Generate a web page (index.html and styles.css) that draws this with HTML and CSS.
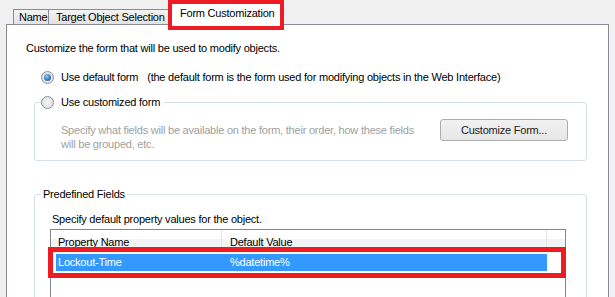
FILE: index.html
```html
<!DOCTYPE html>
<html lang="en">
<head>
  <meta charset="UTF-8" />
  <title>Form Customization</title>
  <link rel="stylesheet" href="styles.css">
</head>
<body>
  <div class="tabs">
    <div class="tab tab-name">Name</div>
    <div class="tab tab-target">Target Object Selection</div>
    <div class="tab tab-active">Form Customization</div>
  </div>

  <div class="panel">
    <div class="intro">Customize the form that will be used to modify objects.</div>

    <div class="radio-row">
      <span class="radio checked"></span>
      <span class="radio-label">Use default form</span>
      <span class="hint">(the default form is the form used for modifying objects in the Web Interface)</span>
    </div>

    <fieldset class="group group-custom">
      <legend>
        <span class="radio"></span>
        <span class="radio-label">Use customized form</span>
      </legend>
      <div class="custom-body">
        <div class="disabled-text">Specify what fields will be available on the form, their order, how these fields will be grouped, etc.</div>
        <button class="btn">Customize Form...</button>
      </div>
    </fieldset>

    <fieldset class="group group-fields">
      <legend>Predefined Fields</legend>
      <div class="fields-note">Specify default property values for the object.</div>
      <div class="listview">
        <div class="lv-header">
          <div class="lv-col lv-col1">Property Name</div>
          <div class="lv-col lv-col2">Default Value</div>
        </div>
        <div class="lv-row selected">
          <div class="lv-cell lv-col1">Lockout-Time</div>
          <div class="lv-cell lv-col2">%datetime%</div>
        </div>
      </div>
    </fieldset>
  </div>
</body>
</html>
```

FILE: styles.css
```css
html, body {
  margin: 0;
  height: 100%;
  overflow: hidden;
}
body {
  background: #f0f0f0;
  font-family: 'Liberation Sans', Arial, sans-serif;
  font-size: 11px;
  line-height: 13px;
  letter-spacing: -0.22px;
  color: #000;
}
.tabs {
  display: flex;
  align-items: flex-start;
  height: 24px;
  padding-left: 13px;
}
.tab {
  box-sizing: border-box;
  height: 15px;
  margin-top: 9px;
  border: 1px solid #898c95;
  border-bottom: none;
  background: linear-gradient(#f3f3f3, #e3e3e3);
  padding: 1px 0 0 5px;
  white-space: nowrap;
}
.tab-name {
  width: 36px;
}
.tab-target {
  width: 126px;
  margin-left: -1px;
  padding-left: 7px;
}
.tab-active {
  position: relative;
  z-index: 2;
  height: 30px;
  width: 116px;
  margin-top: 0;
  margin-left: -6px;
  border: 4px solid #ed1c24;
  background: #fff;
  padding: 3px 0 0 8px;
}
.panel {
  box-sizing: border-box;
  width: 603px;
  height: 400px;
  margin-left: 6px;
  border: 1px solid #898c95;
  background: #fff;
  padding: 17px 0 0 19px;
}
.radio-row {
  display: flex;
  align-items: center;
  margin: 16px 0 0 15px;
}
.radio {
  position: relative;
  box-sizing: border-box;
  width: 13px;
  height: 13px;
  border: 1px solid #8e8f8f;
  border-radius: 50%;
  background: radial-gradient(circle at 50% 50%, #f6f6f6 0, #e6e6e6 55%, #d9d9d9 100%);
  flex: none;
}
.radio.checked::after {
  content: "";
  position: absolute;
  left: 2px;
  top: 2px;
  width: 7px;
  height: 7px;
  border-radius: 50%;
  background: radial-gradient(circle at 40% 35%, #9fd4fb 0, #3d86cf 45%, #1a4f8f 100%);
}
.radio-label {
  margin-left: 7px;
}
.hint {
  margin-left: 9px;
}
.group {
  box-sizing: border-box;
  width: 553px;
  margin: 12px 0 0 8px;
  border: 1px solid #d5dfe5;
  border-radius: 3px;
  padding: 10px 18px 9px 6px;
  min-width: 0;
}
.group legend {
  padding: 0 4px 0 0;
  line-height: 13px;
}
.group-custom legend {
  display: flex;
  align-items: center;
}
.custom-body {
  display: flex;
  align-items: flex-start;
}
.disabled-text {
  width: 362px;
  margin: 4px 0 0 20px;
  line-height: 14px;
  color: #a0a0a0;
}
.btn {
  box-sizing: border-box;
  width: 128px;
  height: 22px;
  margin-left: auto;
  border: 1px solid #acacac;
  border-radius: 3px;
  background: linear-gradient(#f2f2f2, #e6e6e6);
  font-family: inherit;
  font-size: 11px;
  letter-spacing: inherit;
  color: #222;
  padding: 0;
}
.group-fields {
  margin-top: 27px;
  height: 200px;
  padding: 12px 0 0 6px;
}
.group-fields legend {
  padding: 0 2px;
}
.fields-note {
  margin-left: 11px;
}
.listview {
  box-sizing: border-box;
  width: 516px;
  height: 150px;
  margin: 3px 0 0 9px;
  border: 1px solid #828790;
}
.lv-header {
  display: flex;
  height: 23px;
  background: linear-gradient(#fff 0, #fff 9px, #f3f4f6 9px);
}
.lv-col {
  box-sizing: border-box;
  height: 23px;
  padding-top: 6px;
  border-right: 1px solid #e3e5e8;
}
.lv-header .lv-col1 {
  width: 171px;
  padding-left: 7px;
}
.lv-header .lv-col2 {
  width: 325px;
  padding-left: 8px;
}
.lv-row {
  position: relative;
  display: flex;
  width: 491px;
  height: 17px;
  margin: 1px 0 0 5px;
}
.lv-row.selected {
  background: #3399ff;
  color: #fff;
}
.lv-row.selected::after {
  content: "";
  position: absolute;
  left: -8px;
  top: -7px;
  right: -19px;
  bottom: -7px;
  border: 5px solid #ed1c24;
}
.lv-cell {
  box-sizing: border-box;
  padding-top: 2px;
}
.lv-row .lv-col1 {
  width: 166px;
  padding-left: 2px;
}
.lv-row .lv-col2 {
  padding-left: 8px;
}
```
